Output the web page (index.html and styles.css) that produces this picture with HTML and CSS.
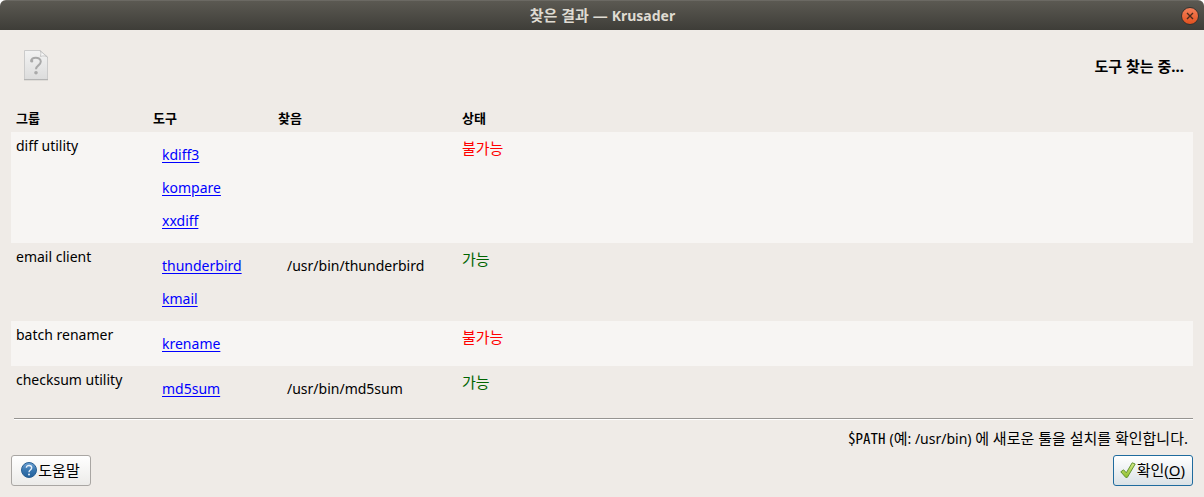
FILE: index.html
```html
<!DOCTYPE html>
<html lang="ko">
<head>
<meta charset="utf-8">
<title>찾은 결과 — Krusader</title>
<link rel="stylesheet" href="styles.css">
</head>
<body>
<div class="window">
  <header class="titlebar">
    <h1 class="window-title">찾은 결과 — <span class="latin">Krusader</span></h1>
    <button class="close" aria-label="닫기">
      <svg width="8" height="8" viewBox="0 0 8 8"><path d="M1 1L7 7M7 1L1 7" stroke="#4a2a1c" stroke-width="1.4"/></svg>
    </button>
  </header>
  <main class="content">
    <div class="heading">
      <svg class="doc-icon" width="26" height="32" viewBox="0 0 26 32">
        <defs>
          <linearGradient id="paper" x1="0" y1="0" x2="0" y2="1"><stop offset="0" stop-color="#f3f3f3"/><stop offset="1" stop-color="#dcdcdc"/></linearGradient>
        </defs>
        <path d="M1 30.500H25" stroke="#dfdcd8" stroke-width="1"/>
        <path d="M1.500 .5H17L24.500 7V29.500H1.500Z" fill="url(#paper)" stroke="#cbcbcb"/>
        <path d="M1 29.500H25" stroke="#b4b4b4"/>
        <path d="M17 .7C18.300 2.500 18 4.500 17.300 6.500C20 5.500 23 5.700 24.500 7.200Z" fill="#fafafa" stroke="#bdbdbd" stroke-width=".8"/>
        <path d="M8.200 11.500C7.500 6.500 17.800 6.200 17.800 11.600C17.800 15.500 13 15.300 13 19.300" fill="none" stroke="#a9a9a9" stroke-width="2"/>
        <circle cx="8.800" cy="11" r="1.500" fill="#a9a9a9"/>
        <circle cx="13" cy="22.800" r="1.800" fill="#a9a9a9"/>
      </svg>
      <h2 class="page-title">도구 찾는 중...</h2>
    </div>
    <table class="tools">
      <colgroup><col class="col-group"><col class="col-tool"><col class="col-found"><col></colgroup>
      <thead>
        <tr><th scope="col">그룹</th><th scope="col">도구</th><th scope="col">찾음</th><th scope="col">상태</th></tr>
      </thead>
      <tbody>
        <tr>
          <td>diff utility</td>
          <td><ul class="list"><li><a href="#kdiff3">kdiff3</a></li><li><a href="#kompare">kompare</a></li><li><a href="#xxdiff">xxdiff</a></li></ul></td>
          <td></td>
          <td class="status missing">불가능</td>
        </tr>
        <tr>
          <td>email client</td>
          <td><ul class="list"><li><a href="#thunderbird">thunderbird</a></li><li><a href="#kmail">kmail</a></li></ul></td>
          <td><ul class="list"><li>/usr/bin/thunderbird</li></ul></td>
          <td class="status ready">가능</td>
        </tr>
        <tr>
          <td>batch renamer</td>
          <td><ul class="list"><li><a href="#krename">krename</a></li></ul></td>
          <td></td>
          <td class="status missing">불가능</td>
        </tr>
        <tr>
          <td>checksum utility</td>
          <td><ul class="list"><li><a href="#md5sum">md5sum</a></li></ul></td>
          <td><ul class="list"><li>/usr/bin/md5sum</li></ul></td>
          <td class="status ready">가능</td>
        </tr>
      </tbody>
    </table>
    <hr class="rule">
    <p class="note"><code class="var">$PATH</code> <span class="latin">(</span>예<span class="latin">: /usr/bin) </span>에 새로운 툴을 설치를 확인합니다.</p>
    <div class="buttons">
      <button class="btn help">
        <svg width="16" height="16" viewBox="0 0 16 16">
          <defs><linearGradient id="ball" x1="0" y1="0" x2="0" y2="1"><stop offset="0" stop-color="#6fa3d6"/><stop offset=".5" stop-color="#3977b0"/><stop offset="1" stop-color="#23609a"/></linearGradient></defs>
          <circle cx="8" cy="8" r="7.500" fill="url(#ball)" stroke="#285f92"/>
          <path d="M5.400 5.800C5.400 2.600 10.700 2.700 10.700 5.800C10.700 8 8 8 8 10.200" fill="none" stroke="#e8f1fa" stroke-width="1.400"/>
          <circle cx="8" cy="12.400" r="1" fill="#e8f1fa"/>
        </svg>
        <span>도움말</span>
      </button>
      <button class="btn ok">
        <svg width="16" height="16" viewBox="0 0 16 16">
          <defs><linearGradient id="tick" x1="0" y1="0" x2="0" y2="1"><stop offset="0" stop-color="#d5e98a"/><stop offset="1" stop-color="#8fbf2c"/></linearGradient></defs>
          <path d="M.8 9.800L3.600 7.800L6.300 10.800L12.200 .8L15.200 2L7.400 15.300L5.800 15.500Z" fill="url(#tick)" stroke="#629433" stroke-width="1" stroke-linejoin="round"/>
        </svg>
        <span>확인(<u>O</u>)</span>
      </button>
    </div>
  </main>
</div>
</body>
</html>
```
FILE: styles.css
```css
* { box-sizing: border-box; }
body {
  margin: 0;
  background: #fff;
  font: 15px/20px "Noto Sans", "Noto Sans CJK KR", sans-serif;
  color: #000;
}
.window {
  min-height: 100vh;
  background: #efebe7;
  border-radius: 6px 6px 0 0;
  overflow: hidden;
}
.titlebar {
  display: grid;
  grid-template-columns: 1fr auto 1fr;
  align-items: center;
  height: 30px;
  padding: 0 5px 0 6px;
  background: linear-gradient(#5b5952, #3e3d38);
  border-top: 1px solid #6b6963;
}
.window-title {
  grid-column: 2;
  margin: 0;
  font-size: 15px;
  line-height: 20px;
  color: #dfdbd2;
}
.latin { font-size: 14px; }
.close {
  justify-self: end;
  display: grid;
  place-items: center;
  width: 18px;
  height: 18px;
  padding: 0;
  border: 1px solid #35332f;
  border-radius: 50%;
  background: linear-gradient(#f4805a, #e2511f);
}
.content { padding: 20px 11px 11px; }
.heading {
  display: flex;
  justify-content: space-between;
  align-items: center;
  height: 54px;
  padding: 0 9px 22px 12px;
}
.page-title { margin: 0; font-size: 15px; line-height: 20px; }
.tools {
  width: 100%;
  table-layout: fixed;
  border-collapse: collapse;
}
.col-group { width: 137px; }
.col-tool { width: 125px; }
.col-found { width: 184px; }
.tools th {
  height: 28px;
  padding: 0 5px 1px;
  text-align: left;
  font-size: 13px;
  vertical-align: middle;
}
.tools td { padding: 4px 5px 0; vertical-align: top; font-size: 14px; }
.tools td.status { padding-top: 6px; font-size: 15px; }
.tools tbody tr:nth-child(odd) { background: #f7f5f3; }
.missing { color: #f00; }
.ready { color: #006400; }
.list { list-style: none; margin: 0; padding: 2px 9px 6px; line-height: 33px; }
.list a { color: #00f; text-underline-offset: 2px; }
.rule {
  margin: 7px 0 0 3px;
  border: 0;
  height: 2px;
  background: linear-gradient(#969491 50%, #fff 50%);
}
.note { margin: 8px 5px 0 0; text-align: right; }
.var { font: 15px/20px "Noto Sans Mono CJK KR", "DejaVu Sans Mono", monospace; }
.buttons { display: flex; justify-content: space-between; margin-top: 6px; }
.btn {
  display: flex;
  align-items: center;
  justify-content: center;
  gap: 1px;
  min-width: 80px;
  height: 31px;
  padding: 0 7px 1px 6px;
  border: 1px solid #a9a6a3;
  border-radius: 3px;
  background: linear-gradient(#fff, #ecebe9);
  font: inherit;
  color: #000;
}
.ok { border-color: #1f6b9e; background: linear-gradient(#fff, #dbe2e6); }
.btn u { text-underline-offset: 2px; }
```
